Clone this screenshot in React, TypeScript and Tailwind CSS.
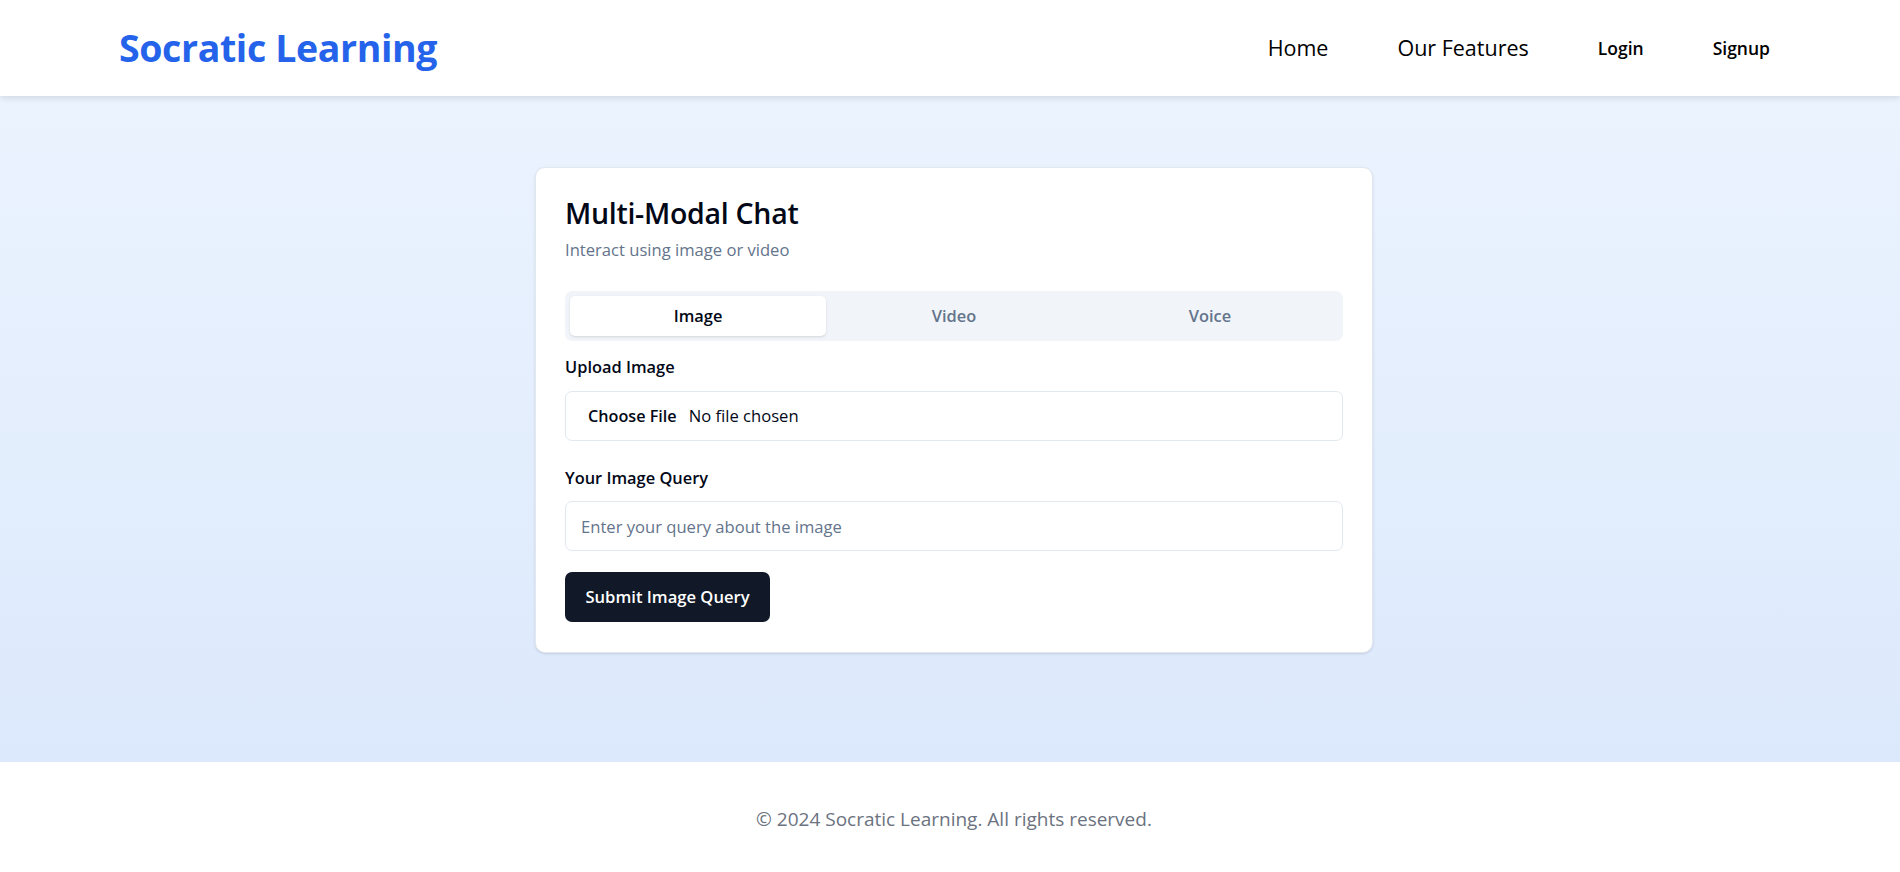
import React, { useState } from 'react';

const font = { fontFamily: '"Open Sans", "Noto Sans", sans-serif' };

function Header() {
  return (
    <header className="bg-white shadow-[0_2px_6px_rgba(15,23,42,0.12)] h-[96px] flex items-center justify-between pl-[119px] pr-[130px] relative z-10">
      <h1 className="text-[37.5px] font-bold text-[#2563eb] tracking-[-0.01em]">Socratic Learning</h1>
      <nav className="flex items-center gap-[69px] text-black">
        <a className="text-[21.5px]">Home</a>
        <a className="text-[21.5px]">Our Features</a>
        <a className="text-[17.5px] font-semibold">Login</a>
        <a className="text-[17.5px] font-semibold">Signup</a>
      </nav>
    </header>
  );
}

const tabs = ['Image', 'Video', 'Voice'];

function ChatCard() {
  const [active, setActive] = useState('Image');

  return (
    <div className="w-[838px] bg-white border border-[#e2e8f0] rounded-[10px] shadow-sm px-[29px] pt-[30px] pb-[30px]">
      <h2 className="text-[28.5px] leading-[30px] font-semibold text-[#020817] tracking-[-0.01em]">Multi-Modal Chat</h2>
      <p className="mt-[9px] text-[16.6px] leading-[25px] text-[#64748b]">Interact using image or video</p>

      <div className="mt-[29px] h-[50px] bg-[#f1f5f9] rounded-[7px] p-[5px] grid grid-cols-3">
        {tabs.map((t) => (
          <button
            key={t}
            onClick={() => setActive(t)}
            className={
              t === active
                ? 'rounded-[5px] bg-white text-[#020817] shadow-sm text-[16.4px] font-semibold'
                : 'rounded-[5px] text-[#64748b] text-[16.4px] font-semibold'
            }
          >
            {t}
          </button>
        ))}
      </div>

      <label className="block mt-[13px] mb-[12px] text-[16.4px] leading-[25px] font-semibold text-[#020817]">Upload Image</label>
      <div className="h-[50px] border border-[#e2e8f0] rounded-[7px] flex items-center pl-[22px] text-[16.6px] text-[#020817]">
        <span className="font-semibold text-[16.2px]">Choose File</span>
        <span className="ml-[12px]">No file chosen</span>
      </div>

      <label className="block mt-[24px] mb-[11px] text-[16.4px] leading-[25px] font-semibold text-[#020817]">Your Image Query</label>
      <input
        type="text"
        placeholder="Enter your query about the image"
        className="w-full h-[50px] border border-[#e2e8f0] rounded-[7px] px-[15px] text-[16.6px] text-[#020817] placeholder:text-[#64748b] outline-none"
        style={font}
      />

      <button className="mt-[21px] h-[50px] w-[205px] bg-[#111827] text-white rounded-[7px] text-[16.6px] font-semibold">
        Submit Image Query
      </button>
    </div>
  );
}

export default function App() {
  return (
    <div className="min-h-screen flex flex-col" style={font}>
      <Header />
      <main className="flex-1 bg-linear-to-b from-[#ebf3fe] to-[#dce9fc] flex justify-center items-start pt-[71px] pl-2">
        <ChatCard />
      </main>
      <footer className="bg-white h-[110px] flex items-center justify-center pl-2 pt-[5px]">
        <p className="text-[19px] text-[#6b7280]">© 2024 Socratic Learning. All rights reserved.</p>
      </footer>
    </div>
  );
}
